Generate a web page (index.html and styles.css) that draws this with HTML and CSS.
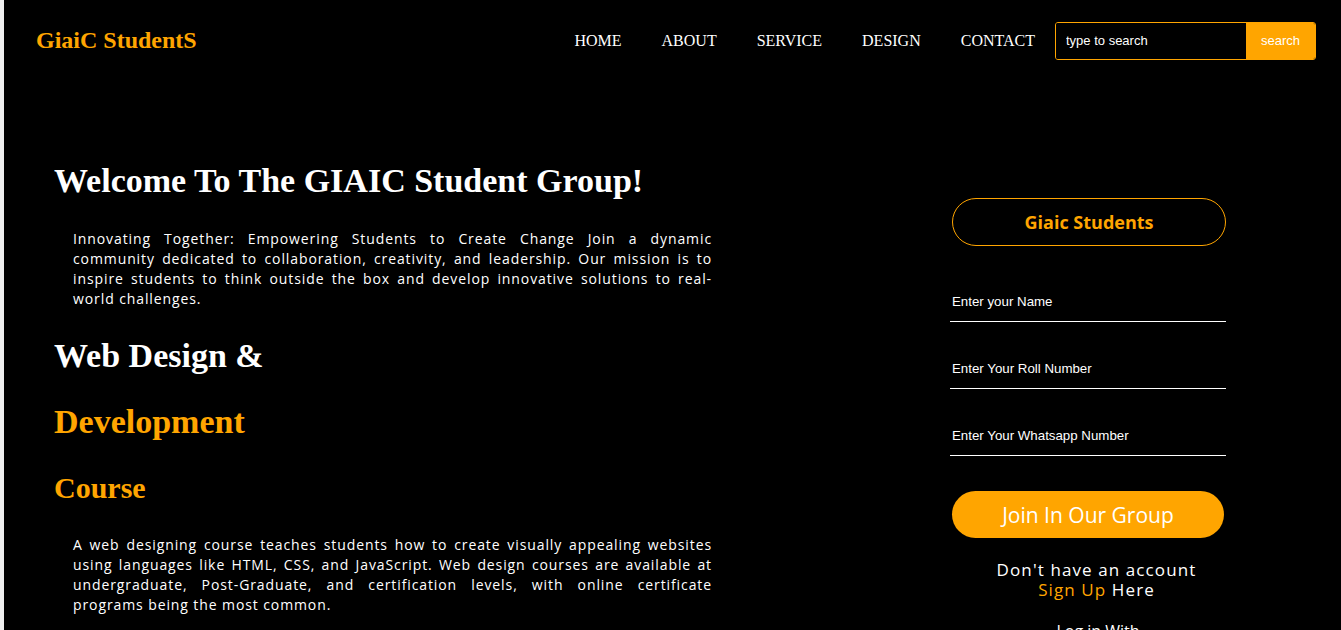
FILE: index.html
```html
<!DOCTYPE html>
<html>
<head>
<meta charset="utf-8">
<link rel="stylesheet" href="styles.css">
</head>
<body>
<div class="page">
  <header class="header">
    <div class="logo">GiaiC StudentS</div>
    <nav class="nav">
      <a href="#">HOME</a>
      <a href="#">ABOUT</a>
      <a href="#">SERVICE</a>
      <a href="#">DESIGN</a>
      <a href="#">CONTACT</a>
    </nav>
    <form class="search">
      <input type="text" placeholder="type to search">
      <button type="button">search</button>
    </form>
  </header>
  <main class="main">
    <section class="intro">
      <h1 class="title">Welcome To The GIAIC Student Group!</h1>
      <p class="text">Innovating Together: Empowering Students to Create Change Join a dynamic community dedicated to collaboration, creativity, and leadership. Our mission is to inspire students to think outside the box and develop innovative solutions to real-world challenges.</p>
      <h2 class="h-white">Web Design &amp;</h2>
      <h2 class="h-orange">Development</h2>
      <h3 class="h-course">Course</h3>
      <p class="text text-2">A web designing course teaches students how to create visually appealing websites using languages like HTML, CSS, and JavaScript. Web design courses are available at undergraduate, Post-Graduate, and certification levels, with online certificate programs being the most common.</p>
    </section>
    <aside class="form">
      <div class="form-title">Giaic Students</div>
      <input class="field" type="text" placeholder="Enter your Name">
      <input class="field" type="text" placeholder="Enter Your Roll Number">
      <input class="field" type="text" placeholder="Enter Your Whatsapp Number">
      <button class="join" type="button">Join In Our Group</button>
      <p class="account">Don't have an account<br><a href="#">Sign Up</a> Here</p>
      <p class="login">Log in With</p>
    </aside>
  </main>
</div>
</body>
</html>
```
FILE: styles.css
```css
html, body {
  margin: 0;
  padding: 0;
  background: #f0f0f0;
}
.page {
  margin-left: 4px;
  background: #000;
  min-height: 630px;
  color: #fff;
}
.header {
  display: flex;
  align-items: center;
  height: 81px;
  padding: 0 25px 0 32px;
}
.logo {
  font-family: "Liberation Serif", "Times New Roman", serif;
  font-weight: bold;
  font-size: 24px;
  color: #ffa500;
  flex: 1;
}
.nav {
  display: flex;
  gap: 40px;
  margin-right: 20px;
}
.nav a {
  font-family: "Liberation Serif", "Times New Roman", serif;
  font-size: 16px;
  color: #fff;
  text-decoration: none;
}
.search {
  display: flex;
  margin: 0;
  height: 36px;
  border: 1px solid #ffa500;
  border-radius: 3px;
  overflow: hidden;
}
.search input {
  width: 190px;
  box-sizing: border-box;
  background: #000;
  border: none;
  padding: 0 10px;
  font-family: "Liberation Sans", Arial, sans-serif;
  font-size: 13px;
  color: #fff;
  outline: none;
}
.search input::placeholder {
  color: #fff;
  opacity: 1;
}
.search button {
  width: 69px;
  background: #ffa500;
  border: none;
  color: #fff;
  font-family: "Liberation Sans", Arial, sans-serif;
  font-size: 13px;
}
.main {
  display: flex;
  padding: 0 0 0 50px;
}
.intro {
  width: 658px;
}
.title {
  font-family: "Liberation Serif", "Times New Roman", serif;
  font-size: 34px;
  font-weight: bold;
  margin: 80px 0 0;
  line-height: 40px;
}
.text {
  font-family: "Open Sans", "Noto Sans", sans-serif;
  font-size: 14px;
  letter-spacing: 0.9px;
  line-height: 20px;
  text-align: justify;
  margin: 28px 0 0 19px;
}
.text-2 {
  margin-top: 27px;
}
.h-white, .h-orange, .h-course {
  font-family: "Liberation Serif", "Times New Roman", serif;
  font-weight: bold;
  margin: 0;
}
.h-white {
  font-size: 34px;
  line-height: 40px;
  margin-top: 27px;
}
.h-orange {
  font-size: 34px;
  line-height: 40px;
  color: #ffa500;
  margin-top: 26px;
}
.h-course {
  font-size: 30px;
  line-height: 40px;
  color: #ffa500;
  margin-top: 26px;
}
.form {
  margin-left: 238px;
  width: 276px;
  display: flex;
  flex-direction: column;
  padding-top: 117px;
}
.form-title {
  margin-left: 2px;
  height: 48px;
  box-sizing: border-box;
  border: 1px solid #ffa500;
  border-radius: 24px;
  display: flex;
  align-items: center;
  justify-content: center;
  color: #ffa500;
  font-family: "Open Sans", "Noto Sans", sans-serif;
  font-weight: bold;
  font-size: 18px;
}
.field {
  margin-top: 36px;
  height: 40px;
  box-sizing: border-box;
  background: transparent;
  border: none;
  border-bottom: 1px solid #fff;
  padding: 0 2px 0;
  font-family: "Liberation Sans", Arial, sans-serif;
  font-size: 13.3px;
  color: #fff;
  outline: none;
}
.field + .field {
  margin-top: 27px;
}
.field::placeholder {
  color: #fff;
  opacity: 1;
}
.join {
  margin: 35px 2px 0;
  height: 47px;
  border: none;
  border-radius: 24px;
  background: #ffa500;
  color: #fff;
  font-family: "Open Sans", "Noto Sans", sans-serif;
  font-size: 21px;
}
.account {
  margin: 22px 0 0;
  padding-left: 17px;
  text-align: center;
  font-family: "Open Sans", "Noto Sans", sans-serif;
  font-size: 17px;
  letter-spacing: 1.1px;
  line-height: 20px;
}
.account a {
  color: #ffa500;
  text-decoration: none;
}
.login {
  margin: 20px 0 0;
  padding-left: 20px;
  text-align: center;
  font-family: "Open Sans", "Noto Sans", sans-serif;
  font-size: 16px;
}
```
